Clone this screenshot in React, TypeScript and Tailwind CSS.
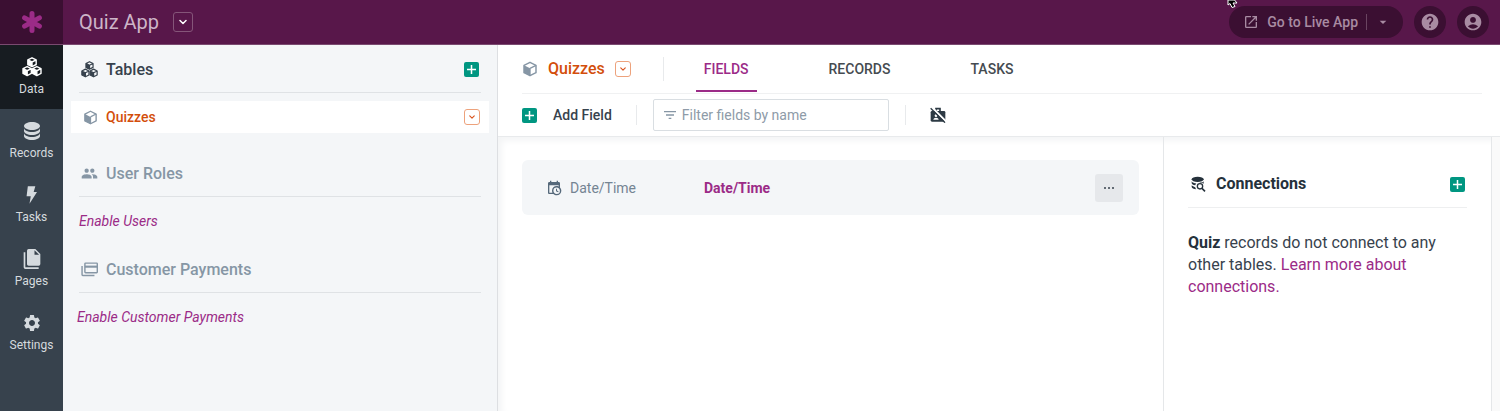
import React from 'react';
import { MdPeople, MdOpenInNew, MdHelp, MdAccountCircle, MdArrowDropDown, MdFilterList, MdSettings } from 'react-icons/md';

type IconProps = { className?: string };

const AsteriskIcon: React.FC<IconProps> = ({ className }) => (
  <svg className={className} viewBox="0 0 24 24" stroke="currentColor" strokeWidth={5} strokeLinecap="round" aria-hidden="true">
    <path d="M12 3.5v17M4.6 7.8l14.8 8.4M19.4 7.8L4.6 16.2" />
  </svg>
);

const ChevronIcon: React.FC<IconProps> = ({ className }) => (
  <svg className={className} viewBox="0 0 8 8" fill="none" stroke="currentColor" strokeWidth={1.5} strokeLinecap="round" strokeLinejoin="round" aria-hidden="true">
    <path d="M1 2.5l3 3 3-3" />
  </svg>
);

const CubeIcon: React.FC<IconProps> = ({ className }) => (
  <svg className={className} viewBox="0 0 24 24" aria-hidden="true">
    <path d="M12 2l9 4.5v11L12 22l-9-4.5v-11z" fill="none" stroke="currentColor" strokeWidth={2.2} strokeLinejoin="round" />
    <path d="M3 6.5L12 11v11l-9-4.500z" fill="currentColor" />
    <path d="M12 11l9-4.500M12 11v11" fill="none" stroke="currentColor" strokeWidth={2} />
  </svg>
);

const CubesIcon: React.FC<IconProps> = ({ className }) => (
  <svg className={className} viewBox="0 0 24 24" aria-hidden="true">
    <g fill="none" stroke="currentColor" strokeWidth={1.7} strokeLinejoin="round">
      <path d="M12 1l5 2.500v5.500L12 11.500 7 9V3.500zM7 3.500L12 6l5-2.500M12 6v5.500" />
      <path d="M6.200 11.500l5 2.500v5.700l-5 2.600-5-2.600V14zM1.200 14l5 2.500 5-2.500M6.200 16.500v5.800" />
      <path d="M17.800 11.500l5 2.500v5.700l-5 2.600-5-2.600V14zM12.800 14l5 2.500 5-2.500M17.800 16.500v5.800" />
    </g>
    <path d="M7 3.500L12 6v5.500L7 9zM1.200 14l5 2.500v5.800l-5-2.600zM12.800 14l5 2.500v5.800l-5-2.600z" fill="currentColor" />
  </svg>
);

const DatabaseIcon: React.FC<IconProps> = ({ className }) => (
  <svg className={className} viewBox="2 2 20 20" fill="currentColor" aria-hidden="true">
    <path d="M12,3C7.58,3 4,4.79 4,7C4,9.21 7.58,11 12,11C16.42,11 20,9.21 20,7C20,4.79 16.42,3 12,3M4,9V12C4,14.21 7.58,16 12,16C16.42,16 20,14.21 20,12V9C20,11.21 16.42,13 12,13C7.58,13 4,11.21 4,9M4,14V17C4,19.21 7.58,21 12,21C16.42,21 20,19.21 20,17V14C20,16.21 16.42,18 12,18C7.58,18 4,16.21 4,14Z" />
  </svg>
);

const BoltIcon: React.FC<IconProps> = ({ className }) => (
  <svg className={className} viewBox="0 0 24 24" fill="currentColor" aria-hidden="true">
    <path d="M7 1.500h9L14 8.500h4L9 22.500l1.500-9H5.500z" />
  </svg>
);

const FilesIcon: React.FC<IconProps> = ({ className }) => (
  <svg className={className} viewBox="0 0 24 24" fill="currentColor" aria-hidden="true">
    <path d="M15,7H20.5L15,1.5V7M8,0H16L22,6V18A2,2 0 0,1 20,20H8C6.890,20 6,19.100 6,18V2A2,2 0 0,1 8,0M4,4V22H20V24H4A2,2 0 0,1 2,22V4H4Z" fillRule="evenodd" />
  </svg>
);

const CardsIcon: React.FC<IconProps> = ({ className }) => (
  <svg className={className} viewBox="0 0 24 24" fill="none" stroke="currentColor" strokeWidth={2} aria-hidden="true">
    <rect x="5.500" y="3" width="17.500" height="13.500" rx="1" />
    <path d="M5.500 8h17.500" strokeWidth={3} />
    <path d="M1.500 7v12.500a1 1 0 0 0 1 1h16.500" />
  </svg>
);

const CalendarClockIcon: React.FC<IconProps> = ({ className }) => (
  <svg className={className} viewBox="0 0 24 24" fill="currentColor" aria-hidden="true">
    <path d="M15,13H16.5V15.82L18.94,17.23L18.19,18.53L15,16.69V13M19,8H5V19H9.67C9.24,18.09 9,17.07 9,16A7,7 0 0,1 16,9C17.07,9 18.09,9.24 19,9.67V8M5,21C3.89,21 3,20.1 3,19V5C3,3.89 3.89,3 5,3H6V1H8V3H16V1H18V3H19A2,2 0 0,1 21,5V11.1C22.24,12.36 23,14.09 23,16A7,7 0 0,1 16,23C14.09,23 12.36,22.24 11.1,21H5M16,11.15A4.85,4.85 0 0,0 11.15,16C11.15,18.68 13.32,20.85 16,20.85A4.85,4.85 0 0,0 20.85,16C20.85,13.32 18.68,11.15 16,11.15Z" />
  </svg>
);

const BadgeOffIcon: React.FC<IconProps> = ({ className }) => (
  <svg className={className} viewBox="0 0 24 24" aria-hidden="true">
    <path d="M3 6h18a2 2 0 0 1 2 2v12a2 2 0 0 1-2 2H3a2 2 0 0 1-2-2V8a2 2 0 0 1 2-2z" fill="currentColor" />
    <path d="M9 9V2.500h6V9" fill="none" stroke="currentColor" strokeWidth={2.500} />
    <circle cx="9" cy="13" r="2" fill="#fff" />
    <path d="M5 19c0-4 8-4 8 0z" fill="#fff" />
    <path d="M2.500 0L24 21.500" stroke="#fff" strokeWidth={3} />
    <path d="M1 2l21.500 21.500" stroke="currentColor" strokeWidth={2} />
  </svg>
);

const DatabaseSearchIcon: React.FC<IconProps> = ({ className }) => (
  <svg className={className} viewBox="0 0 24 24" fill="currentColor" aria-hidden="true">
    <ellipse cx="11.500" cy="5" rx="9" ry="4" />
    <path d="M2.500 8c1 2 4 3 7 3.200-1 .8-1.500 1.800-1.700 2.800-3-.5-5.300-2-5.300-3.500zM2.500 14c1 1.300 3 2.300 5.300 2.700.2 1.200.7 2.200 1.500 3-3.800-.2-6.800-1.700-6.800-3.700zM14 10.500c3-.3 5.500-1.300 6.500-2.700v3.700c-1.500-1-4-1.500-6.500-1z" />
    <circle cx="15" cy="15.500" r="4" fill="none" stroke="currentColor" strokeWidth={2} />
    <path d="M18 18.500l4.500 4.500" stroke="currentColor" strokeWidth={2.500} />
  </svg>
);

const PlusButton: React.FC<{ label: string }> = ({ label }) => (
  <button aria-label={label} className="flex h-[15px] w-[15px] items-center justify-center rounded-xs bg-[#009681] text-white">
    <svg className="h-[9px] w-[9px]" viewBox="0 0 9 9" stroke="currentColor" strokeWidth={1.5} aria-hidden="true">
      <path d="M4.500 0v9M0 4.500h9" />
    </svg>
  </button>
);

const OrangeMenuButton: React.FC<{ label: string }> = ({ label }) => (
  <button aria-label={label} className="flex h-4 w-4 items-center justify-center rounded-[3px] border border-[#eda27c] text-[#d9541e]">
    <ChevronIcon className="h-[6px] w-[6px]" />
  </button>
);

const navItems = [
  { label: 'Data', Icon: CubesIcon, active: true },
  { label: 'Records', Icon: DatabaseIcon, active: false },
  { label: 'Tasks', Icon: BoltIcon, active: false },
  { label: 'Pages', Icon: FilesIcon, active: false },
  { label: 'Settings', Icon: MdSettings, active: false },
];

const Header: React.FC = () => (
  <header className="flex h-[45px] items-center border-b border-[#7a4a70] bg-[#58174a]">
    <a href="#home" aria-label="Home" className="flex h-full w-[63px] shrink-0 items-center justify-center bg-[#3b0f32] text-[#9b2b87]">
      <AsteriskIcon className="h-6 w-6" />
    </a>
    <h1 className="ml-4 text-xl text-[#cdb5c8]">Quiz App</h1>
    <button aria-label="App menu" className="ml-[14px] flex h-5 w-5 items-center justify-center rounded-[3px] border border-[#855579] text-white">
      <ChevronIcon className="h-2 w-2" />
    </button>
    <div className="ml-auto mr-[11px] flex items-center gap-[11px] text-[#a88ba2]">
      <div className="flex h-8 items-center rounded-full bg-[#3b0f32] pl-[14px] pr-3">
        <a href="#live" className="flex items-center gap-2 text-sm font-medium">
          <MdOpenInNew className="h-4 w-4" />
          Go to Live App
        </a>
        <span className="ml-2 h-4 w-px bg-[#6a4561]" />
        <button aria-label="Live app options" className="ml-2">
          <MdArrowDropDown className="h-4 w-4" />
        </button>
      </div>
      <button aria-label="Help" className="flex h-8 w-8 items-center justify-center rounded-full bg-[#3b0f32]">
        <MdHelp className="h-5 w-5" />
      </button>
      <button aria-label="Account" className="flex h-8 w-8 items-center justify-center rounded-full bg-[#3b0f32]">
        <MdAccountCircle className="h-5 w-5" />
      </button>
    </div>
    <svg className="absolute right-[261px] top-0 h-2 w-3" viewBox="0 0 12 8" aria-hidden="true">
      <path d="M1 0v5l2-1.500 2 4 3-1-2-3.500h4L7.500 0z" fill="#000" stroke="#fff" />
    </svg>
  </header>
);

const NavRail: React.FC = () => (
  <nav className="w-[63px] shrink-0 bg-[#37424d]">
    {navItems.map(({ label, Icon, active }) => (
      <a
        key={label}
        href={`#${label.toLowerCase()}`}
        className={`flex h-16 flex-col items-center justify-center gap-1 text-xs leading-4 ${active ? 'bg-[#171c21] text-white' : 'text-[#d5dade]'}`}
      >
        <Icon className="h-5 w-5" />
        <span className="text-[#d5dade]">{label}</span>
      </a>
    ))}
  </nav>
);

const TablesPanel: React.FC = () => (
  <aside className="w-[435px] shrink-0 border-r border-[#dddfe2] bg-[#f4f6f8] text-[#8696a5]">
    <div className="mx-4 flex h-12 items-center border-b border-[#dfe2e5] px-[2px] pt-[2px] text-[#37424d]">
      <CubesIcon className="h-[17px] w-[17px]" />
      <h2 className="ml-2 mr-auto text-base font-medium">Tables</h2>
      <PlusButton label="Add table" />
    </div>
    <div className="mx-2 mt-2 flex h-8 items-center bg-white pl-3 pr-[9px]">
      <CubeIcon className="h-[15px] w-[15px]" />
      <a href="#quizzes" className="ml-2 mr-auto text-sm font-medium text-[#d34e0b]">Quizzes</a>
      <OrangeMenuButton label="Quizzes options" />
    </div>
    <div className="mx-4 mt-4 flex h-12 items-center border-b border-[#dfe2e5] px-[2px] pt-[2px]">
      <MdPeople className="h-[17px] w-[17px]" />
      <h2 className="ml-2 text-base font-medium">User Roles</h2>
    </div>
    <a href="#users" className="ml-4 mt-[14px] block text-sm italic text-[#9b2b87]">Enable Users</a>
    <div className="mx-4 mt-[14px] flex h-12 items-center border-b border-[#dfe2e5] px-[2px] pt-[2px]">
      <CardsIcon className="h-[17px] w-[17px]" />
      <h2 className="ml-2 text-base font-medium">Customer Payments</h2>
    </div>
    <a href="#payments" className="ml-[14px] mt-[14px] block text-sm italic text-[#9b2b87]">Enable Customer Payments</a>
  </aside>
);

const Toolbar: React.FC = () => (
  <div className="border-b border-[#e8eaec] bg-white pl-6 pr-[18px]">
    <div className="flex h-[49px] items-center border-b border-[#f0f1f2] pb-px">
      <CubeIcon className="h-4 w-4 text-[#8696a5]" />
      <h2 className="ml-[10px] mr-[10px] text-base font-medium text-[#d34e0b]">Quizzes</h2>
      <OrangeMenuButton label="Table options" />
      <span className="ml-8 mr-8 h-6 w-px bg-[#e8eaec]" />
      <div className="flex h-full gap-16 text-sm font-medium text-[#454b50]">
        <a href="#fields" className="flex items-center border-b-2 border-[#9b2b87] px-2 pt-[2px] text-[#9b2b87]">FIELDS</a>
        <a href="#records" className="flex items-center px-2">RECORDS</a>
        <a href="#tasks" className="flex items-center px-2">TASKS</a>
      </div>
    </div>
    <div className="flex h-[42px] items-center">
      <PlusButton label="Add field" />
      <button className="ml-4 text-sm font-medium text-[#37424d]">Add Field</button>
      <span className="ml-6 mr-4 h-5 w-px bg-[#e8eaec]" />
      <label className="flex h-8 w-[236px] items-center gap-1 rounded-xs border border-[#d9dee2] px-2 text-[#8696a5]">
        <MdFilterList className="h-4 w-4" />
        <input aria-label="Filter fields by name" placeholder="Filter fields by name" className="min-w-0 flex-1 text-sm outline-none placeholder:text-[#8e9ba8]" />
      </label>
      <span className="mx-4 h-5 w-px bg-[#e8eaec]" />
      <button aria-label="Hide badges" className="ml-2 text-[#2d3a44]">
        <BadgeOffIcon className="h-4 w-4" />
      </button>
    </div>
  </div>
);

const Connections: React.FC = () => (
  <aside className="w-[328px] shrink-0 border-l border-[#e5e7e9] px-6 pt-6">
    <div className="flex h-[47px] items-center border-b border-[#eeeff0] px-[2px] text-[#25313b]">
      <DatabaseSearchIcon className="h-4 w-4" />
      <h2 className="ml-[10px] mr-auto text-base font-bold">Connections</h2>
      <PlusButton label="Add connection" />
    </div>
    <p className="mt-6 text-base leading-[22px] text-[#37424d]">
      <strong className="text-[#25313b]">Quiz</strong> records do not connect to any other tables.{' '}
      <a href="#learn" className="text-[#9b2b87]">Learn more about connections.</a>
    </p>
  </aside>
);

const App: React.FC = () => {
  return (
    <div className="relative flex min-h-screen flex-col bg-white font-['Roboto','Liberation_Sans',sans-serif]">
      <Header />
      <div className="flex flex-1">
        <NavRail />
        <TablesPanel />
        <main className="flex min-w-0 flex-1 flex-col">
          <Toolbar />
          <div className="flex flex-1 shadow-[inset_4px_4px_6px_#f4f5f6]">
            <div className="min-w-0 flex-1 px-6 pt-[23px]">
              <div className="flex h-[55px] items-center rounded-md bg-[#f4f6f8] pl-6 pr-4">
                <CalendarClockIcon className="h-4 w-4 text-[#56697b]" />
                <span className="ml-2 w-[134px] text-sm text-[#748493]">Date/Time</span>
                <a href="#datetime" className="mr-auto text-sm font-bold text-[#9b2b87]">Date/Time</a>
                <button aria-label="Field options" className="flex h-7 w-7 items-center justify-center gap-[2px] rounded-[3px] bg-[#e6e8eb]">
                  <span className="h-[2px] w-[2px] rounded-full bg-[#37424d]" />
                  <span className="h-[2px] w-[2px] rounded-full bg-[#37424d]" />
                  <span className="h-[2px] w-[2px] rounded-full bg-[#37424d]" />
                </button>
              </div>
            </div>
            <Connections />
            <div className="w-[9px] shrink-0 border-l border-[#e5e7e9] bg-[#fafafa]" />
          </div>
        </main>
      </div>
    </div>
  );
};

export default App;
